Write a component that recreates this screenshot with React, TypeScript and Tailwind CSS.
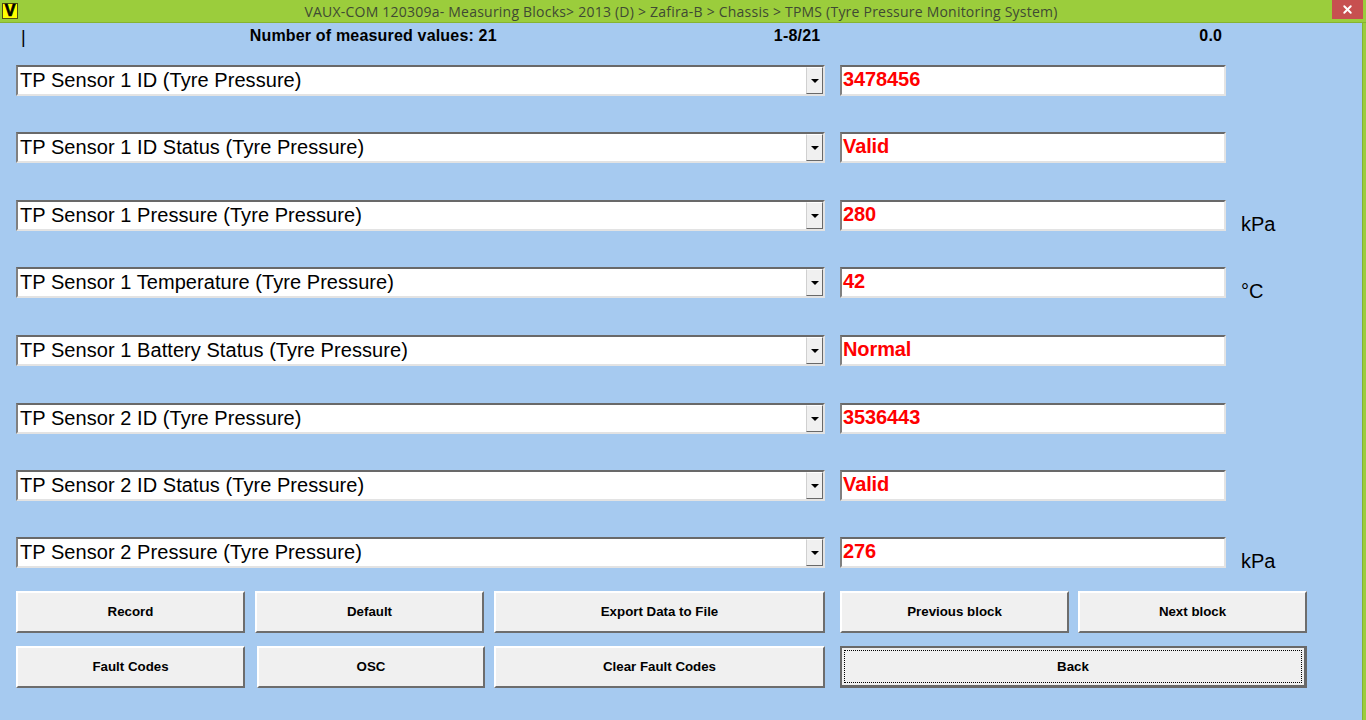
import { X } from "lucide-react"

type Row = { label: string; value: string; unit?: string; gap: string }

const rows: Row[] = [
  { label: "TP Sensor 1 ID (Tyre Pressure)", value: "3478456", gap: "mt-0" },
  { label: "TP Sensor 1 ID Status (Tyre Pressure)", value: "Valid", gap: "mt-[36px]" },
  { label: "TP Sensor 1 Pressure (Tyre Pressure)", value: "280", unit: "kPa", gap: "mt-[37px]" },
  { label: "TP Sensor 1 Temperature (Tyre Pressure)", value: "42", unit: "°C", gap: "mt-[36px]" },
  { label: "TP Sensor 1 Battery Status (Tyre Pressure)", value: "Normal", gap: "mt-[37px]" },
  { label: "TP Sensor 2 ID (Tyre Pressure)", value: "3536443", gap: "mt-[37px]" },
  { label: "TP Sensor 2 ID Status (Tyre Pressure)", value: "Valid", gap: "mt-[36px]" },
  { label: "TP Sensor 2 Pressure (Tyre Pressure)", value: "276", unit: "kPa", gap: "mt-[36px]" },
]

const sunken = "border-t-2 border-l-2 border-r-2 border-b-2 border-t-[#696969] border-l-[#808080] border-r-[#e3e3e3] border-b-[#e3e3e3] bg-white"

function WinButton({ label, width, gap, focused }: { label: string; width: string; gap?: string; focused?: boolean }) {
  if (focused) {
    return (
      <button className={`${width} ${gap ?? ""} h-[42px] border-t-2 border-l-2 border-[#696969] border-r-[3px] border-b-[3px] bg-[#f0f0f0] p-[2px] text-[13.3px] font-bold text-black`}>
        <span className="flex h-full w-full items-center justify-center border border-dotted border-black">{label}</span>
      </button>
    )
  }
  return (
    <button className={`${width} ${gap ?? ""} h-[42px] border-t-2 border-l-2 border-r-2 border-b-2 border-t-white border-l-white border-r-[#6d6d6d] border-b-[#6d6d6d] bg-[#f0f0f0] text-[13.3px] font-bold text-black`}>
      {label}
    </button>
  )
}

export default function App() {
  return (
    <div className="h-[720px] w-[1366px] overflow-hidden bg-[#a6caf0] font-['Liberation_Sans',Arial,sans-serif] text-black">
      {/* TITLE BAR */}
      <div className="flex h-[23px] items-start border-b border-[#86b330] bg-[#9bcd3c]">
        <div className="ml-[2px] mt-[3px] flex h-[16px] w-[16px] items-center justify-center border border-[#4f4f10] bg-[#ffff00] text-[16px] leading-none font-bold text-black [-webkit-text-stroke:0.7px_black]">
          V
        </div>
        <div className="ml-[286px] w-[754px] pt-[3px] text-center font-['Open_Sans',sans-serif] text-[14px] leading-[18px] tracking-[0.22px] whitespace-nowrap text-[#3f4a33]">
          VAUX-COM 120309a- Measuring Blocks&gt; 2013 (D) &gt; Zafira-B &gt; Chassis &gt; TPMS (Tyre Pressure Monitoring System)
        </div>
        <div className="ml-[274px] flex h-[19px] w-[31px] items-center justify-center bg-[#c75050] text-white">
          <X size={13} strokeWidth={3.5} />
        </div>
      </div>

      <div className="h-[697px] border-r-[3px] border-[#9bcd3c]">
        <div className="h-full border-r border-[#86b330]">
          {/* INFO LINE */}
          <div className="flex h-[42px] text-[16px] font-bold">
            <span className="ml-[21px] mt-[1px] text-[18px] font-normal">|</span>
            <span className="ml-[224px] mt-[1px] tracking-[0.18px]">Number of measured values: 21</span>
            <span className="ml-[277px] mt-[1px] tracking-[0.2px]">1-8/21</span>
            <span className="ml-[379px] mt-[1px] tracking-[0.2px]">0.0</span>
          </div>

          {/* MEASURED VALUES */}
          <div className="ml-[16px] flex flex-col">
            {rows.map((row) => (
              <div key={row.label} className={`${row.gap} flex h-[31px]`}>
                <div className={`${sunken} flex h-full w-[809px] items-center justify-between`}>
                  <span className="pb-[2px] pl-[2px] text-[20px] tracking-[0.06px] whitespace-nowrap">{row.label}</span>
                  <span className="flex h-full w-[17px] items-center justify-center border border-r-[#696969] border-b-[#696969] border-t-white border-l-[#d0d0d0] bg-[#f0f0f0]">
                    <span className="h-0 w-0 border-x-[4px] border-t-[4px] border-x-transparent border-t-black" />
                  </span>
                </div>
                <div className={`${sunken} ml-[15px] flex h-full w-[386px] items-center pb-[3px] pl-[1px] text-[20px] font-bold tracking-[-0.1px] text-[#ff0000]`}>
                  {row.value}
                </div>
                {row.unit && <span className="ml-[15px] mt-[12px] text-[20px] leading-[24px]">{row.unit}</span>}
              </div>
            ))}
          </div>

          {/* BUTTONS */}
          <div className="ml-[16px] mt-[23px] flex">
            <WinButton label="Record" width="w-[229px]" />
            <WinButton label="Default" width="w-[229px]" gap="ml-[10px]" />
            <WinButton label="Export Data to File" width="w-[331px]" gap="ml-[10px]" />
            <WinButton label="Previous block" width="w-[229px]" gap="ml-[15px]" />
            <WinButton label="Next block" width="w-[229px]" gap="ml-[9px]" />
          </div>
          <div className="ml-[16px] mt-[13px] flex">
            <WinButton label="Fault Codes" width="w-[229px]" />
            <WinButton label="OSC" width="w-[228px]" gap="ml-[12px]" />
            <WinButton label="Clear Fault Codes" width="w-[331px]" gap="ml-[9px]" />
            <WinButton label="Back" width="w-[467px]" gap="ml-[15px]" focused />
          </div>
        </div>
      </div>
    </div>
  )
}
